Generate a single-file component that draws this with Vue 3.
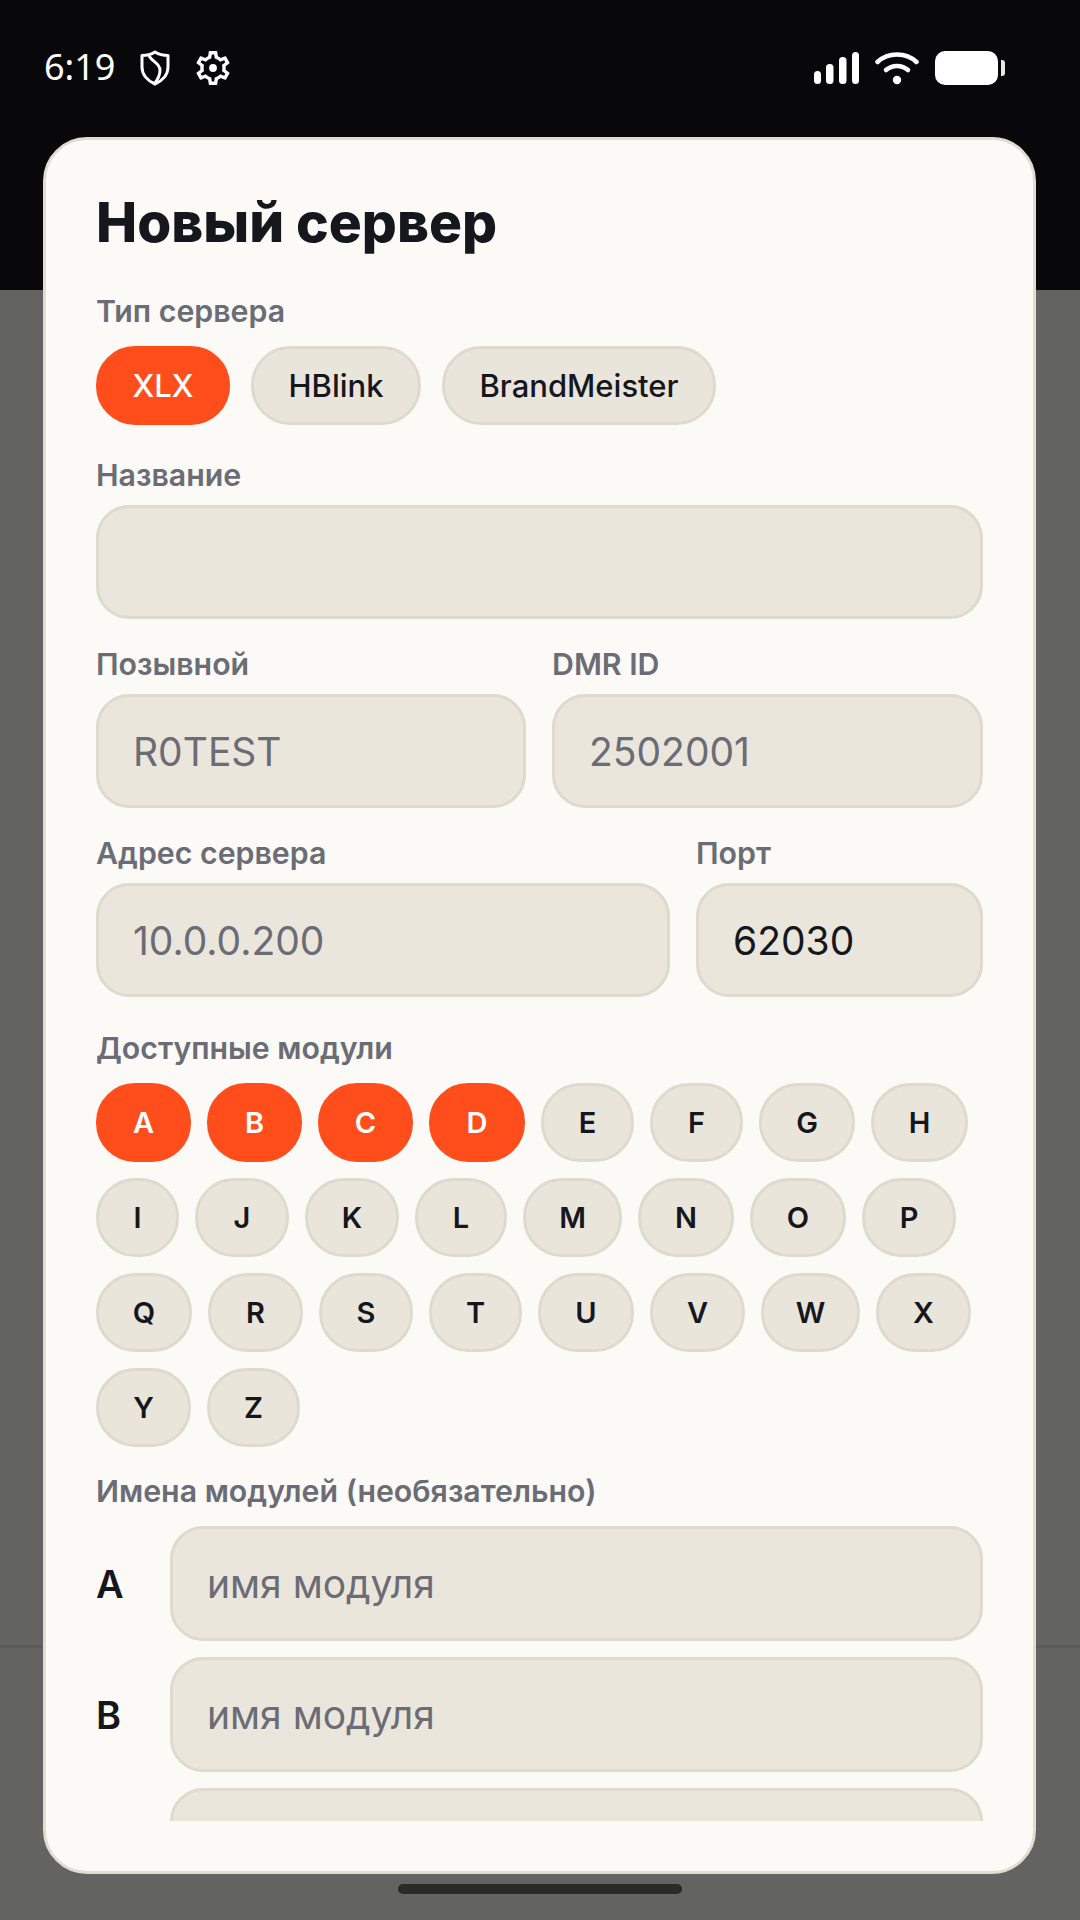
<script setup>
const types = [
  { name: 'XLX', on: true, w: 134 },
  { name: 'HBlink', on: false, w: 170 },
  { name: 'BrandMeister', on: false, w: 274 },
]
const modules = [
  ['A', 95, 1], ['B', 95, 1], ['C', 95, 1], ['D', 96, 1], ['E', 93, 0], ['F', 93, 0], ['G', 96, 0], ['H', 97, 0],
  ['I', 83, 0], ['J', 94, 0], ['K', 94, 0], ['L', 92, 0], ['M', 99, 0], ['N', 96, 0], ['O', 96, 0], ['P', 94, 0],
  ['Q', 96, 0], ['R', 95, 0], ['S', 94, 0], ['T', 93, 0], ['U', 96, 0], ['V', 95, 0], ['W', 99, 0], ['X', 95, 0],
  ['Y', 95, 0], ['Z', 93, 0],
].map(([name, w, on]) => ({ name, w, on: !!on }))
const names = ['A', 'B', 'C']
</script>

<template>
  <div class="screen">
    <header class="status">
      <div class="status-left">
        <span class="time">6:19</span>
        <svg class="shield" width="30" height="36" viewBox="0 0 30 36" fill="none" stroke="#fff" stroke-width="3">
          <path d="M15 2 C19 4.5 24 5.5 28 5.5 V17 C28 25 22 31 15 34 C8 31 2 25 2 17 V5.5 C6 5.5 11 4.5 15 2 Z" stroke-linejoin="round" />
          <path d="M9 5.5 C11 11 20 13 20 20 C20 25 18 29 15 33" />
        </svg>
        <svg class="gear" width="34" height="34" viewBox="2 2 20 20" fill="#fff">
          <path d="M19.43 12.98c.04-.32.07-.64.07-.98 0-.34-.03-.66-.07-.98l2.11-1.65c.19-.15.24-.42.12-.64l-2-3.46c-.09-.16-.26-.25-.44-.25-.06 0-.12.01-.17.03l-2.49 1c-.52-.4-1.08-.73-1.69-.98l-.38-2.65C14.46 2.18 14.25 2 14 2h-4c-.25 0-.46.18-.49.42l-.38 2.65c-.61.25-1.17.59-1.69.98l-2.49-1c-.06-.02-.12-.03-.18-.03-.17 0-.34.09-.43.25l-2 3.46c-.13.22-.07.49.12.64l2.11 1.65c-.04.32-.07.65-.07.98 0 .33.03.66.07.98l-2.11 1.65c-.19.15-.24.42-.12.64l2 3.46c.09.16.26.25.44.25.06 0 .12-.01.17-.03l2.49-1c.52.4 1.08.73 1.69.98l.38 2.65c.03.24.24.42.49.42h4c.25 0 .46-.18.49-.42l.38-2.65c.61-.25 1.17-.59 1.69-.98l2.49 1c.06.02.12.03.18.03.17 0 .34-.09.43-.25l2-3.46c.12-.22.07-.49-.12-.64l-2.11-1.65zm-1.98-1.71c.04.31.05.52.05.73 0 .21-.02.43-.05.73l-.14 1.13.89.7 1.08.84-.7 1.21-1.27-.51-1.04-.42-.9.68c-.43.32-.84.56-1.25.73l-1.06.43-.16 1.13-.2 1.35h-1.4l-.19-1.35-.16-1.13-1.06-.43c-.43-.18-.83-.41-1.23-.71l-.91-.7-1.06.43-1.27.51-.7-1.21 1.08-.84.89-.7-.14-1.13c-.03-.31-.05-.54-.05-.74s.02-.43.05-.73l.14-1.13-.89-.7-1.08-.84.7-1.21 1.27.51 1.04.42.9-.68c.43-.32.84-.56 1.25-.73l1.06-.43.16-1.13.2-1.35h1.39l.19 1.35.16 1.13 1.06.43c.43.18.83.41 1.23.71l.91.7 1.06-.43 1.27-.51.7 1.21-1.07.85-.89.7.14 1.13z" />
          <circle cx="12" cy="12" r="2.3" />
        </svg>
      </div>
      <div class="status-right">
        <svg width="45" height="32" viewBox="0 0 45 32" fill="#fff">
          <rect x="0" y="19" width="7" height="13" rx="3.5" />
          <rect x="12" y="12" width="7.5" height="20" rx="3.5" />
          <rect x="25" y="5" width="7.5" height="27" rx="3.5" />
          <rect x="38" y="0" width="7" height="32" rx="3.5" />
        </svg>
        <svg width="44" height="33" viewBox="0 0 44 33" fill="none" stroke="#fff" stroke-width="4.5" stroke-linecap="round">
          <path d="M2.5 10 C13 0 31 0 41.5 10" />
          <path d="M11 18 C17 12.5 27 12.5 33 18" />
          <circle cx="22" cy="28" r="4.2" fill="#fff" stroke="none" />
        </svg>
        <div class="battery"><div class="battery-body"></div><div class="battery-tip"></div></div>
      </div>
    </header>

    <div class="backdrop"><div class="backdrop-footer"></div></div>

    <section class="sheet">
      <div class="scroll">
        <h1>Новый сервер</h1>

        <div class="label first">Тип сервера</div>
        <div class="chips">
          <div v-for="t in types" :key="t.name" class="chip type" :class="{ on: t.on }" :style="{ width: t.w + 'px' }">{{ t.name }}</div>
        </div>

        <div class="label after-chips tight">Название</div>
        <div class="input"></div>

        <div class="row even">
          <div class="field">
            <div class="label tight">Позывной</div>
            <div class="input muted">R0TEST</div>
          </div>
          <div class="field">
            <div class="label tight">DMR ID</div>
            <div class="input muted">2502001</div>
          </div>
        </div>

        <div class="row addr">
          <div class="field">
            <div class="label tight">Адрес сервера</div>
            <div class="input muted">10.0.0.200</div>
          </div>
          <div class="field">
            <div class="label tight">Порт</div>
            <div class="input">62030</div>
          </div>
        </div>

        <div class="label modules-label">Доступные модули</div>
        <div class="chips modules">
          <div v-for="m in modules" :key="m.name" class="chip mod" :class="{ on: m.on }" :style="{ width: m.w + 'px' }">{{ m.name }}</div>
        </div>

        <div class="label names-label">Имена модулей (необязательно)</div>
        <div class="names">
          <div v-for="n in names" :key="n" class="name-row">
            <span class="name-letter">{{ n }}</span>
            <div class="input muted name-input">имя модуля</div>
          </div>
        </div>
      </div>
    </section>

    <div class="home"></div>
  </div>
</template>

<style scoped>
.screen {
  position: relative;
  width: 1080px;
  height: 1920px;
  overflow: hidden;
  display: flex;
  flex-direction: column;
  background: #636361;
  font-family: Inter, "Noto Sans", sans-serif;
}
.status {
  height: 290px;
  flex: none;
  box-sizing: border-box;
  background: #08080a;
  padding: 50px 75px 0 44px;
  display: flex;
  justify-content: space-between;
  align-items: flex-start;
  color: #fff;
}
.status-left { display: flex; align-items: center; height: 36px; }
.time {
  font-family: "Noto Sans", sans-serif;
  font-size: 36px;
  font-weight: 400;
  line-height: 28px;
  width: 96px;
  padding-bottom: 2px;
}
.shield { margin-right: 26px; }
.status-right { display: flex; align-items: flex-start; gap: 16px; margin-top: 2px; }
.battery { display: flex; align-items: center; height: 34px; margin-top: -1px; gap: 3px; }
.battery-body { width: 63px; height: 34px; border-radius: 10px; background: #fff; }
.battery-tip { width: 4px; height: 16px; border-radius: 0 3px 3px 0; background: #e8e8e8; }
.backdrop { flex: 1; position: relative; }
.backdrop-footer {
  position: absolute;
  left: 0;
  right: 0;
  bottom: 0;
  height: 272px;
  border-top: 3px solid #5b5b59;
}
.sheet {
  position: absolute;
  left: 43px;
  top: 137px;
  width: 993px;
  height: 1737px;
  box-sizing: border-box;
  background: #fbfaf6;
  border: 3px solid #e0ddd3;
  border-radius: 44px;
  padding: 0 50px 50px;
}
.scroll { height: 100%; overflow: hidden; }
h1 {
  margin: 0;
  padding-top: 39px;
  font-size: 55px;
  line-height: 86px;
  font-weight: 800;
  color: #16171c;
}
.label {
  font-family: Inter, sans-serif;
  font-size: 30.3px;
  line-height: 36px;
  font-weight: 600;
  color: #6b6c75;
  margin-bottom: 16px;
}
.label.tight { margin-bottom: 12px; }
.label.first { margin-top: 28px; margin-bottom: 17px; }
.label.after-chips { margin-top: 32px; }
.chips { display: flex; flex-wrap: wrap; }
.chip {
  box-sizing: border-box;
  height: 79px;
  display: flex;
  align-items: center;
  justify-content: center;
  background: #e9e5db;
  border: 3px solid #dedacf;
  color: #16171c;
  font-weight: 500;
  font-size: 31px;
}
.chip.on { background: #ff4d1c; border-color: #ff4d1c; color: #fff; }
.chip.type { border-radius: 39px; margin-right: 21px; }
.chip.mod { border-radius: 39px; font-size: 29px; font-weight: 600; }
.modules { gap: 16px; }
.input {
  box-sizing: border-box;
  height: 114px;
  background: #eae6dc;
  border: 3px solid #dedacf;
  border-radius: 33px;
  padding: 0 34px;
  display: flex;
  align-items: center;
  font-family: Inter, sans-serif;
  font-size: 39px;
  color: #16171c;
}
.input.muted { color: #6b6c75; }
.row { display: grid; gap: 26px; margin-top: 27px; }
.row.even { grid-template-columns: 430px 431px; }
.row.addr { grid-template-columns: 574px 287px; }
.modules-label { margin-top: 33px; margin-bottom: 17px; }
.names-label { margin-top: 26px; margin-bottom: 17px; }
.names { display: flex; flex-direction: column; gap: 16px; }
.name-row { display: flex; align-items: center; }
.name-letter {
  width: 74px;
  flex: none;
  font-size: 38px;
  font-weight: 600;
  color: #16171c;
}
.name-input { flex: 1; height: 115px; }
.home {
  position: absolute;
  left: 398px;
  top: 1884px;
  width: 284px;
  height: 10px;
  border-radius: 5px;
  background: #2a2b29;
}
</style>
